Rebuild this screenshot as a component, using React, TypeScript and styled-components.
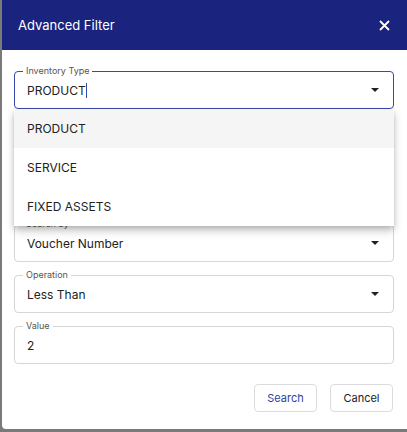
import React from 'react'
import styled, { createGlobalStyle } from 'styled-components'

const GlobalStyle = createGlobalStyle`
  html, body {
    margin: 0;
    padding: 0;
    background: #7a7a7a;
    font-family: Inter, 'Noto Sans', 'Liberation Sans', sans-serif;
  }
`

const Page = styled.div`
  width: 407px;
  height: 432px;
  overflow: hidden;
  padding-left: 2px;
  box-sizing: border-box;
`

const Dialog = styled.div`
  position: relative;
  width: 408px;
  height: 429px;
  background: #fff;
  border-radius: 0 0 4px 4px;
  overflow: hidden;
`

const Header = styled.div`
  height: 50px;
  background: #1a237e;
  display: flex;
  align-items: center;
  justify-content: space-between;
  padding: 0 18px 0 16px;
  box-sizing: border-box;
`

const Title = styled.h2`
  margin: 0;
  font-size: 13px;
  font-weight: 400;
  color: #fff;
`

const CloseButton = styled.button`
  border: 0;
  background: none;
  padding: 0;
  display: flex;
  color: #fff;
  margin-right: 2px;
`

const Body = styled.div`
  display: flex;
  flex-direction: column;
  gap: 13px;
  padding: 21px 16px 0 12px;
`

const Field = styled.div<{ $focused?: boolean }>`
  position: relative;
  height: 38px;
  box-sizing: border-box;
  border: 1px solid ${({ $focused }) => ($focused ? '#3949ab' : '#d6d6d6')};
  border-radius: 4px;
  display: flex;
  align-items: center;
  padding: 0 12px 0 12px;
`

const Label = styled.span`
  position: absolute;
  top: -6px;
  left: 8px;
  padding: 0 3px;
  background: #fff;
  font-size: 9px;
  line-height: 10px;
  color: #555;
`

const Value = styled.span`
  flex: 1;
  font-size: 12px;
  color: #222;
  display: flex;
  align-items: center;
`

const Caret = styled.span`
  display: inline-block;
  width: 1px;
  height: 15px;
  margin-left: 0;
  background: #3949ab;
`

const Arrow = styled.span`
  width: 0;
  height: 0;
  border-left: 4px solid transparent;
  border-right: 4px solid transparent;
  border-top: 4px solid #222;
  margin-right: 2px;
`

const Menu = styled.ul`
  position: absolute;
  top: 109px;
  left: 12px;
  width: 380px;
  margin: 0;
  padding: 0;
  list-style: none;
  background: #fff;
  border-radius: 0 0 4px 4px;
  box-shadow: 0 5px 8px rgba(0, 0, 0, 0.22), 0 2px 4px rgba(0, 0, 0, 0.12);
`

const MenuItem = styled.li<{ $active?: boolean }>`
  height: 39px;
  display: flex;
  align-items: center;
  padding-left: 13px;
  font-size: 12px;
  color: #222;
  background: ${({ $active }) => ($active ? '#f5f5f5' : '#fff')};
`

const Actions = styled.div`
  display: flex;
  justify-content: flex-end;
  gap: 13px;
  padding: 7px 0 0;
  margin-right: 1px;
`

const Button = styled.button<{ $primary?: boolean }>`
  width: 63px;
  height: 28px;
  background: #fff;
  border: 1px solid #dcdcdc;
  border-radius: 4px;
  font-family: inherit;
  font-size: 11px;
  color: ${({ $primary }) => ($primary ? '#303f9f' : '#222')};
`

const SelectField = ({ label, value, focused, caret }: { label?: string; value: string; focused?: boolean; caret?: boolean }) => (
  <Field $focused={focused}>
    {label && <Label>{label}</Label>}
    <Value>
      {value}
      {caret && <Caret />}
    </Value>
    <Arrow />
  </Field>
)

export default function App() {
  return (
    <>
      <GlobalStyle />
      <Page>
        <Dialog>
          <Header>
            <Title>Advanced Filter</Title>
            <CloseButton>
              <svg width="11" height="11" viewBox="0 0 11 11">
                <path d="M1 1L10 10M10 1L1 10" stroke="#fff" strokeWidth="1.8" />
              </svg>
            </CloseButton>
          </Header>
          <Body>
            <SelectField label="Inventory Type" value="PRODUCT" focused caret />
            {/* fields hidden under the open menu */}
            <SelectField value="" />
            <SelectField value="" />
            <SelectField label="Search by" value="Voucher Number" />
            <SelectField label="Operation" value="Less Than" />
            <Field>
              <Label>Value</Label>
              <Value>2</Value>
            </Field>
            <Actions>
              <Button $primary>Search</Button>
              <Button>Cancel</Button>
            </Actions>
          </Body>
          <Menu>
            <MenuItem $active>PRODUCT</MenuItem>
            <MenuItem>SERVICE</MenuItem>
            <MenuItem>FIXED ASSETS</MenuItem>
          </Menu>
        </Dialog>
      </Page>
    </>
  )
}
